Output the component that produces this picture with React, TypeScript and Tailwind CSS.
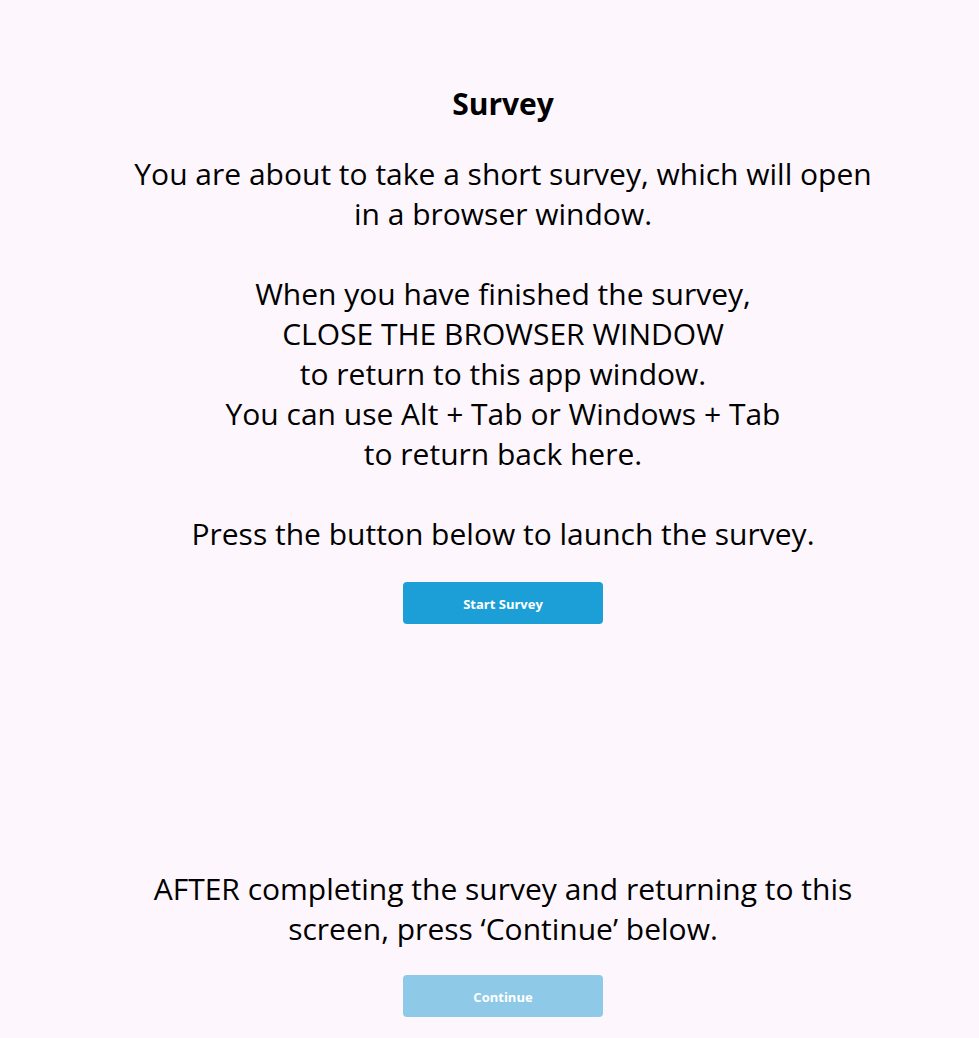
const font = "font-['Segoe_UI','Open_Sans',sans-serif]";

const App = () => {
    return (
        <div className={`min-h-[1038px] bg-[#fdf7fd] text-black pl-[27px] flex flex-col items-center ${font}`}>
            <h1 className="mt-[84px] h-[40px] leading-[40px] text-[30px] font-bold">Survey</h1>
            <div className="mt-[30px] text-[30px] leading-[40px] text-center">
                <p>You are about to take a short survey, which will open</p>
                <p>in a browser window.</p>
                <p>&nbsp;</p>
                <p>When you have finished the survey,</p>
                <p>CLOSE THE BROWSER WINDOW</p>
                <p>to return to this app window.</p>
                <p>You can use Alt + Tab or Windows + Tab</p>
                <p>to return back here.</p>
                <p>&nbsp;</p>
                <p>Press the button below to launch the survey.</p>
            </div>
            <button className="mt-[28px] w-[200px] h-[42px] pt-[3px] rounded-[4px] bg-[#1c9fd6] text-white text-[13px] font-bold">
                Start Survey
            </button>
            <div className="mt-[245px] text-[30px] leading-[40px] text-center">
                <p>AFTER completing the survey and returning to this</p>
                <p>screen, press ‘Continue’ below.</p>
            </div>
            <button disabled className="mt-[26px] w-[200px] h-[42px] pt-[3px] rounded-[4px] bg-[#8ecae7] text-white text-[13px] font-bold">
                Continue
            </button>
        </div>
    );
}

export default App;
